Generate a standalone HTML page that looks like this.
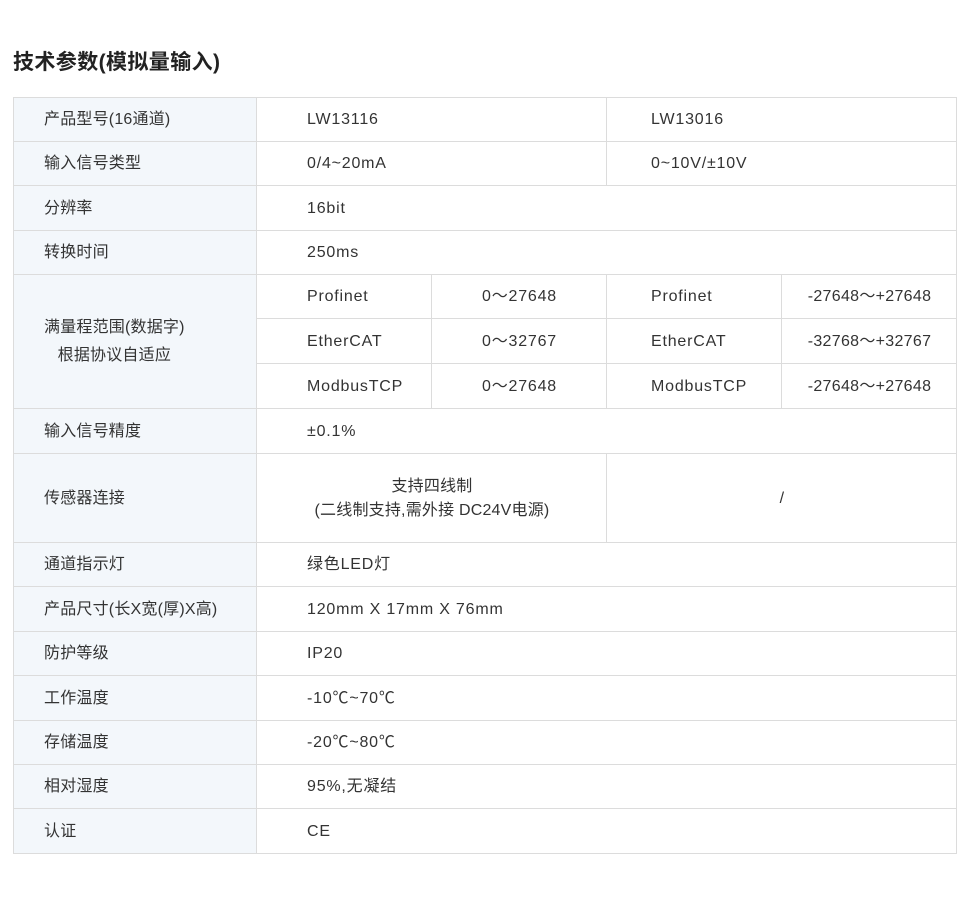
<!DOCTYPE html>
<html><head><meta charset="utf-8"><style>
body{margin:0;background:#fff;width:969px;height:915px;position:relative;font-family:"Liberation Sans","Noto Sans CJK SC",sans-serif;color:#333;}
h1{position:absolute;left:13px;top:49px;margin:0;font-size:21px;font-weight:bold;color:#222;line-height:28px;letter-spacing:0.4px;}
.c{position:absolute;display:flex;align-items:center;box-sizing:border-box;border-top:1px solid #dcdcdc;border-left:1px solid #dcdcdc;font-size:16px;line-height:24px;background:#fff;letter-spacing:0.8px;}
.l{left:13px;width:244px;background:#f3f7fb;padding-left:30px;letter-spacing:0.2px;}
.f{left:256px;width:701px;padding-left:50px;}
.h1{left:256px;width:351px;padding-left:50px;}
.h2{left:606px;width:351px;padding-left:44px;}
.q1{left:256px;width:176px;padding-left:50px;}
.q2{left:431px;width:176px;justify-content:center;}
.q3{left:606px;width:176px;padding-left:44px;}
.q4{left:781px;width:176px;justify-content:center;letter-spacing:0.3px;}
.ctr{justify-content:center;text-align:center;padding:0;letter-spacing:0.2px;}
#frame{position:absolute;left:13px;top:97px;width:944px;height:757px;box-sizing:border-box;border-right:1px solid #dcdcdc;border-bottom:1px solid #dcdcdc;pointer-events:none;}
</style></head><body>
<h1>技术参数(模拟量输入)</h1>

<div class="c l" style="top:97px;height:45px">产品型号(16通道)</div>
<div class="c h1" style="top:97px;height:45px">LW13116</div>
<div class="c h2" style="top:97px;height:45px">LW13016</div>

<div class="c l" style="top:141px;height:45px">输入信号类型</div>
<div class="c h1" style="top:141px;height:45px">0/4~20mA</div>
<div class="c h2" style="top:141px;height:45px">0~10V/±10V</div>

<div class="c l" style="top:185px;height:46px">分辨率</div>
<div class="c f" style="top:185px;height:46px">16bit</div>

<div class="c l" style="top:230px;height:45px">转换时间</div>
<div class="c f" style="top:230px;height:45px">250ms</div>

<div class="c l" style="top:274px;height:135px"><span style="display:inline-block;text-align:center;line-height:28px">满量程范围(数据字)<br>根据协议自适应</span></div>
<div class="c q1" style="top:274px;height:45px">Profinet</div>
<div class="c q2" style="top:274px;height:45px">0～27648</div>
<div class="c q3" style="top:274px;height:45px">Profinet</div>
<div class="c q4" style="top:274px;height:45px">-27648～+27648</div>
<div class="c q1" style="top:318px;height:46px">EtherCAT</div>
<div class="c q2" style="top:318px;height:46px">0～32767</div>
<div class="c q3" style="top:318px;height:46px">EtherCAT</div>
<div class="c q4" style="top:318px;height:46px">-32768～+32767</div>
<div class="c q1" style="top:363px;height:46px">ModbusTCP</div>
<div class="c q2" style="top:363px;height:46px">0～27648</div>
<div class="c q3" style="top:363px;height:46px">ModbusTCP</div>
<div class="c q4" style="top:363px;height:46px">-27648～+27648</div>

<div class="c l" style="top:408px;height:46px">输入信号精度</div>
<div class="c f" style="top:408px;height:46px">±0.1%</div>

<div class="c l" style="top:453px;height:90px">传感器连接</div>
<div class="c h1 ctr" style="top:453px;height:90px"><span>支持四线制<br>(二线制支持,需外接 DC24V电源)</span></div>
<div class="c h2 ctr" style="top:453px;height:90px">/</div>

<div class="c l" style="top:542px;height:45px">通道指示灯</div>
<div class="c f" style="top:542px;height:45px">绿色LED灯</div>

<div class="c l" style="top:586px;height:46px">产品尺寸(长X宽(厚)X高)</div>
<div class="c f" style="top:586px;height:46px">120mm X 17mm X 76mm</div>

<div class="c l" style="top:631px;height:45px">防护等级</div>
<div class="c f" style="top:631px;height:45px">IP20</div>

<div class="c l" style="top:675px;height:46px">工作温度</div>
<div class="c f" style="top:675px;height:46px">-10℃~70℃</div>

<div class="c l" style="top:720px;height:45px">存储温度</div>
<div class="c f" style="top:720px;height:45px">-20℃~80℃</div>

<div class="c l" style="top:764px;height:45px">相对湿度</div>
<div class="c f" style="top:764px;height:45px">95%,无凝结</div>

<div class="c l" style="top:808px;height:46px">认证</div>
<div class="c f" style="top:808px;height:46px">CE</div>

<div id="frame"></div>
</body></html>
